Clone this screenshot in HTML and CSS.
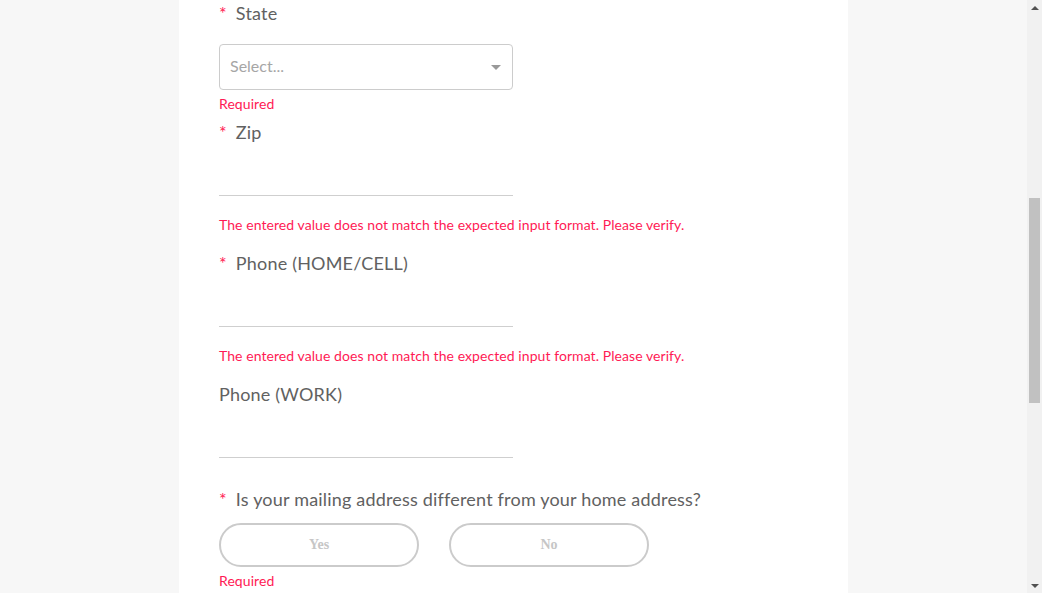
FILE: index.html
```html
<!DOCTYPE html>
<html>
<head>
<meta charset="utf-8">
<link rel="stylesheet" href="styles.css">
</head>
<body>
<div class="page">
  <main class="card">
    <div class="field">
      <div class="label"><span class="req">*</span>State</div>
      <div class="select">
        <span class="placeholder">Select...</span>
        <span class="arrow"></span>
      </div>
      <div class="error tight">Required</div>
    </div>
    <div class="field">
      <div class="label"><span class="req">*</span>Zip</div>
      <div class="input"></div>
      <div class="error">The entered value does not match the expected input format. Please verify.</div>
    </div>
    <div class="field">
      <div class="label"><span class="req">*</span>Phone (HOME/CELL)</div>
      <div class="input"></div>
      <div class="error">The entered value does not match the expected input format. Please verify.</div>
    </div>
    <div class="field plain">
      <div class="label">Phone (WORK)</div>
      <div class="input"></div>
    </div>
    <div class="field">
      <div class="label"><span class="req">*</span>Is your mailing address different from your home address?</div>
      <div class="choices">
        <button class="choice">Yes</button>
        <button class="choice">No</button>
      </div>
      <div class="error tight">Required</div>
    </div>
  </main>
</div>
<div class="scrollbar">
  <div class="sb-up"></div>
  <div class="sb-track"><div class="sb-thumb"></div></div>
  <div class="sb-down"></div>
</div>
</body>
</html>
```

FILE: styles.css
```css
html, body {
  margin: 0;
  height: 100%;
  overflow: hidden;
}
body {
  background: #f7f7f7;
  font-family: "Lato", "Noto Sans", sans-serif;
  color: #616161;
}
.page {
  width: calc(100% - 15px);
  height: 100%;
  display: flex;
  justify-content: center;
}
.card {
  width: 589px;
  padding: 0 40px;
  background: #fff;
  height: 100%;
}
.field {
  display: flex;
  flex-direction: column;
  margin-bottom: 16px;
}
.field.plain {
  margin-bottom: 28px;
}
.label {
  font-size: 18px;
  line-height: 26px;
  height: 26px;
  letter-spacing: 0.19px;
  white-space: nowrap;
}
.req {
  color: #ff1a55;
  margin-right: 9px;
}
.select {
  margin-top: 18px;
  width: 294px;
  height: 46px;
  box-sizing: border-box;
  border: 1px solid #cccccc;
  border-radius: 4px;
  display: flex;
  align-items: center;
  justify-content: space-between;
  padding: 0 11px 3px 10px;
}
.placeholder {
  font-size: 16px;
  color: #a6a6a6;
}
.arrow {
  width: 0;
  height: 0;
  margin-top: 3px;
  border-left: 5px solid transparent;
  border-right: 5px solid transparent;
  border-top: 5px solid #999;
}
.input {
  margin-top: 11px;
  width: 294px;
  height: 40px;
  box-sizing: border-box;
  border-bottom: 1px solid #cfcfcf;
}
.error {
  margin-top: 20px;
  font-size: 14px;
  line-height: 18px;
  letter-spacing: 0.07px;
  color: #ff1a55;
  white-space: nowrap;
}
.error.tight {
  margin-top: 5px;
}
.field:first-child {
  margin-bottom: 6px;
}
.choices {
  margin-top: 11px;
  display: flex;
  gap: 30px;
}
.choice {
  width: 200px;
  height: 44px;
  border: 2px solid #cbcbcb;
  border-radius: 22px;
  background: #fff;
  font-family: "Liberation Serif", serif;
  font-weight: bold;
  font-size: 14px;
  color: #c6c6c6;
  padding: 0;
}
.scrollbar {
  position: fixed;
  top: 0;
  right: 0;
  width: 15px;
  height: 100%;
  background: #f1f1f1;
  display: flex;
  flex-direction: column;
}
.sb-up, .sb-down {
  height: 15px;
  display: flex;
  align-items: center;
  justify-content: center;
}
.sb-up::before {
  content: "";
  border-left: 4px solid transparent;
  border-right: 4px solid transparent;
  border-bottom: 4px solid #505050;
}
.sb-down::before {
  content: "";
  border-left: 4px solid transparent;
  border-right: 4px solid transparent;
  border-top: 4px solid #505050;
}
.sb-track {
  flex: 1;
  padding-top: 183px;
}
.sb-thumb {
  margin: 0 2px;
  height: 205px;
  background: #c1c1c1;
}
```
